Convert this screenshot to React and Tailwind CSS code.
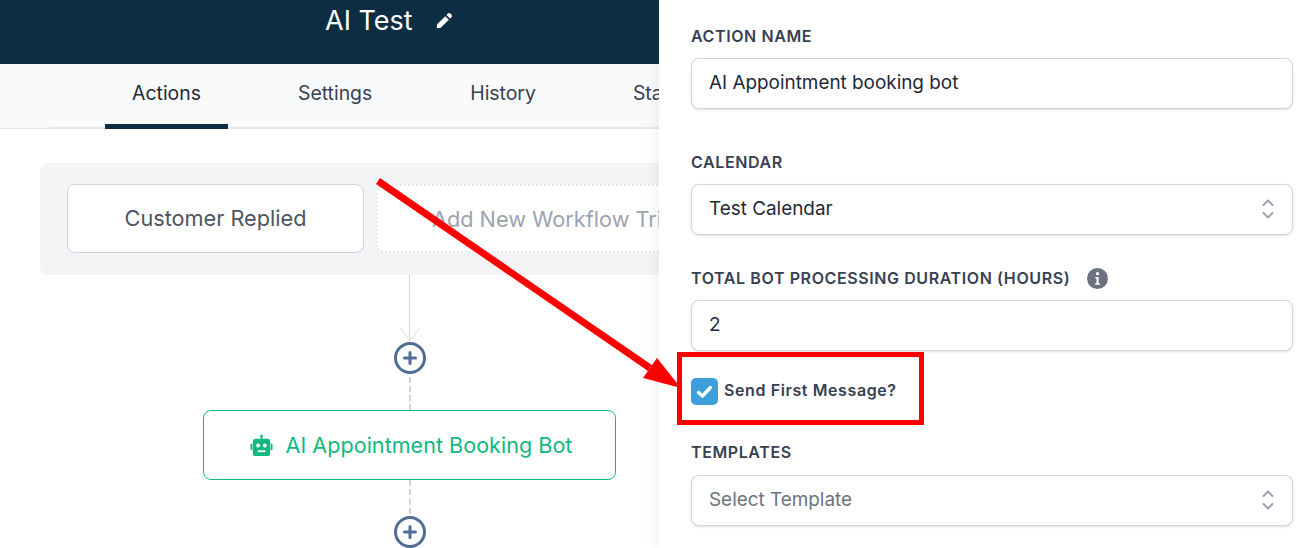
import React from "react";

const font = { fontFamily: "Inter, 'Liberation Sans', sans-serif" };

function Plus() {
  return (
    <div className="w-8 h-8 rounded-full border-[3px] border-[#4f6d94] bg-white flex items-center justify-center shrink-0">
      <svg width="14" height="14" viewBox="0 0 14 14">
        <path d="M7 1.5v11M1.5 7h11" stroke="#4f6d94" strokeWidth="3" strokeLinecap="round" />
      </svg>
    </div>
  );
}

function Dashed({ h }) {
  return <div className={`w-0 border-l-2 border-dashed border-[#d1d5db] ${h}`} />;
}

function Chevrons() {
  return (
    <svg width="14" height="22" viewBox="0 0 14 22" fill="none" stroke="#9ca3af" strokeWidth="2" strokeLinecap="round" strokeLinejoin="round">
      <path d="M2.5 7 7 2.5 11.5 7" />
      <path d="M2.5 15 7 19.5 11.5 15" />
    </svg>
  );
}

function Field({ label, children, mt, extra }) {
  return (
    <div className={mt}>
      <div className="flex items-center h-5 gap-[17px] text-[16px] font-semibold tracking-[0.6px] uppercase text-[#374151]">
        <span>{label}</span>
        {extra}
      </div>
      {children}
    </div>
  );
}

function Box({ children, muted, chevron, mt = "mt-[12px]" }) {
  return (
    <div className={`${mt} h-[50.5px] rounded-lg border border-[#d1d5db] bg-white shadow-sm flex items-center justify-between pl-[17px] pr-[17px] text-[18.9px] ${muted ? "text-[#6b7280]" : "text-[#1f2937]"}`}>
      <span>{children}</span>
      {chevron && <Chevrons />}
    </div>
  );
}

export default function App() {
  return (
    <div className="relative w-[1315px] h-[548px] overflow-hidden bg-white" style={font}>
      <div className="w-[660px] overflow-hidden">
        <div className="h-16 bg-[#0d2e42] flex pl-[325px] pt-[4px]">
          <span className="text-[27px] leading-[34px] text-white">AI Test</span>
          <svg className="ml-[23px] mt-[8px]" width="17" height="17" viewBox="0 0 20 20" fill="white">
            <path d="M14.2 1.6a1.6 1.6 0 0 1 2.2 0l2 2a1.6 1.6 0 0 1 0 2.2l-1.9 1.9-4.2-4.2zM10.9 4.9l4.2 4.2L5.6 18.6 0.8 19.2l.6-4.8z" />
          </svg>
        </div>
        <div className="h-[65px] bg-[#f9fafb] pl-[49px] border-b border-[#e5e7eb]">
          <div className="h-[65px] border-b-2 border-[#e5e7eb] flex text-[19.4px] text-[#374151] whitespace-nowrap">
            <div className="ml-[56px] w-[123px] h-[65px] shrink-0 flex items-center justify-center pb-[1px] text-[#1f2937] border-b-[5px] border-[#0d2e42]">Actions</div>
            <div className="ml-[70px] flex items-center h-[60px] shrink-0">Settings</div>
            <div className="ml-[98px] flex items-center h-[60px] shrink-0">History</div>
            <div className="ml-[97px] flex items-center h-[60px] shrink-0">Statistics</div>
          </div>
        </div>
        <div className="pl-10">
          <div className="mt-[34px] h-[112px] w-[700px] bg-[#f3f4f6] rounded-l-lg pl-[27px] pt-[21px] flex gap-[12px]">
            <div className="w-[297px] h-[69px] rounded-lg border border-[#cbd5e1] bg-white flex items-center justify-center text-[21.7px] text-[#4b5563] shrink-0">
              Customer Replied
            </div>
            <div className="w-[400px] h-[69px] rounded-lg border-2 border-dotted border-[#e5e7eb] bg-white flex items-center pl-[54px] pt-[1px] text-[21.7px] text-[#9ca3af] shrink-0 whitespace-nowrap">
              Add New Workflow Trigger
            </div>
          </div>
        </div>
      </div>

      <div className="absolute left-[203px] top-[275px] w-[413px] flex flex-col items-center">
        <div className="relative h-[67px] w-8">
          <div className="w-px h-[66px] bg-[#d1d5db] mx-auto" />
          <svg className="absolute top-[52px] left-[6px]" width="20" height="15" viewBox="0 0 20 15" fill="none" stroke="#d9dbe1" strokeWidth="1">
            <path d="M0.5 1 10 14 19.5 1" />
          </svg>
        </div>
        <div className="ml-[1px]"><Plus /></div>
        <div className="mt-[3px] ml-[1px]"><Dashed h="h-[33px]" /></div>
        <div className="w-[413px] h-[70px] rounded-lg border border-[#10b981] bg-white flex items-center justify-center gap-[13px] pl-[3px] text-[21.6px] text-[#10b981]">
          <svg width="23" height="23" viewBox="0 0 24 24" fill="#10b981">
            <path d="M12 0.5a1.5 1.5 0 0 1 1 2.6V5h5a3 3 0 0 1 3 3v12a3 3 0 0 1-3 3H6a3 3 0 0 1-3-3V8a3 3 0 0 1 3-3h5V3.1a1.5 1.5 0 0 1 1-2.6z" />
            <rect x="0.5" y="10" width="2" height="7" rx="1" />
            <rect x="21.5" y="10" width="2" height="7" rx="1" />
            <circle cx="8.5" cy="12" r="2" fill="white" />
            <circle cx="15.5" cy="12" r="2" fill="white" />
            <rect x="8" y="17" width="8" height="2" fill="white" />
          </svg>
          <span>AI Appointment Booking Bot</span>
        </div>
        <div className="ml-[1px]"><Dashed h="h-[34px]" /></div>
        <div className="ml-[1px] mt-[2px]"><Plus /></div>
      </div>

      <div className="absolute top-0 right-0 bottom-0 w-[656px] bg-white shadow-[-6px_0_10px_rgba(0,0,0,0.04)] pl-[32px] pr-[22px] pt-[26px]">
        <Field label="Action Name">
          <Box>AI Appointment booking bot</Box>
        </Field>
        <Field label="Calendar" mt="mt-[43.5px]">
          <Box chevron>Test Calendar</Box>
        </Field>
        <Field label="Total Bot Processing Duration (hours)" mt="mt-[33.5px]" extra={
          <svg width="21" height="21" viewBox="0 0 20 20">
            <circle cx="10" cy="10" r="10" fill="#6b7280" />
            <circle cx="10" cy="5.5" r="1.6" fill="white" />
            <path d="M8 8.5h3v6h1.2v1.5H7.8v-1.5H9V10H8z" fill="white" />
          </svg>
        }>
          <Box>2</Box>
        </Field>
        <div className="mt-[27.5px] h-[27px] flex items-center gap-[6px] text-[16px] font-semibold tracking-[0.6px] text-[#374151]">
          <div className="w-[27px] h-[27px] rounded-[5px] bg-[#3b9fdc] flex items-center justify-center">
            <svg width="17" height="14" viewBox="0 0 17 14" fill="none" stroke="white" strokeWidth="3.4" strokeLinecap="round" strokeLinejoin="round">
              <path d="M2.5 7.5 6.5 11 14.5 2.5" />
            </svg>
          </div>
          <span className="mb-[3px]">Send First Message?</span>
        </div>
        <Field label="Templates" mt="mt-[37px]">
          <Box muted chevron mt="mt-[13px]">Select Template</Box>
        </Field>
      </div>

      <div className="absolute left-[677px] top-[352px] w-[247px] h-[73px] border-[5px] border-[#ff0000]" />
      <svg className="absolute left-0 top-0 pointer-events-none" width="1315" height="548" viewBox="0 0 1315 548">
        <path d="M378 181 650 368" stroke="#ff0000" strokeWidth="7" fill="none" />
        <polygon points="681,388 643,378 657,358" fill="#ff0000" />
      </svg>
    </div>
  );
}
